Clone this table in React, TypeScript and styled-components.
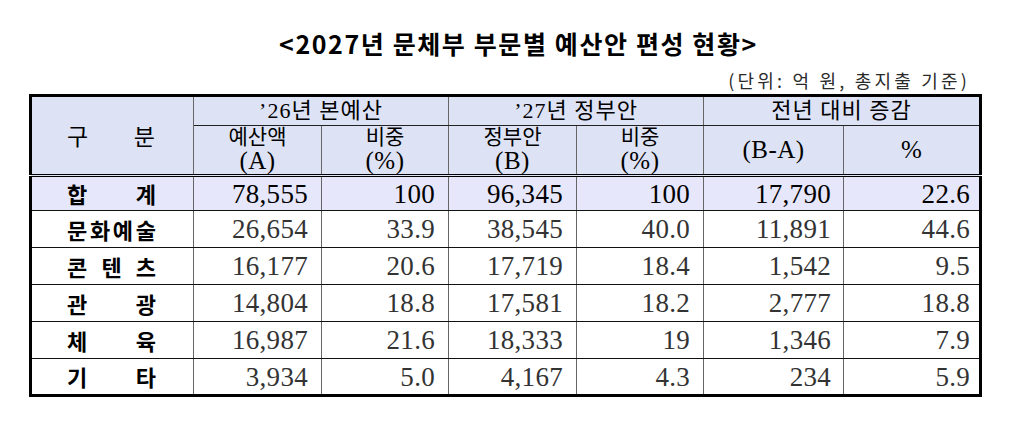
import React from "react";
import styled, { createGlobalStyle } from "styled-components";

const GlobalStyle = createGlobalStyle`
  html, body { margin: 0; padding: 0; background: #fff; }
  body { font-family: "Noto Sans CJK KR", "Noto Sans", sans-serif; color: #000; }
`;

const Page = styled.div`
  width: 1009px;
  height: 445px;
  padding-top: 26px;
  box-sizing: border-box;
  display: flex;
  flex-direction: column;
`;

const Title = styled.h1`
  margin: 0;
  padding-left: 28px;
  text-align: center;
  font-family: "Noto Sans CJK KR", sans-serif;
  font-weight: 700;
  font-size: 25px;
  line-height: 34px;
  letter-spacing: 1.6px;
  color: #000;
`;

const Note = styled.div`
  align-self: flex-end;
  margin-right: 39px;
  font-family: "Noto Sans CJK KR", sans-serif;
  font-size: 18px;
  line-height: 22px;
  letter-spacing: 3.2px;
  color: #2a2a2a;
  margin-top: 9px;
`;

const Table = styled.table`
  margin: 3px 0 0 29px;
  width: 950px;
  table-layout: fixed;
  border-collapse: collapse;
  border: 3px solid #000;
`;

const HeadCell = styled.th<{ $double?: boolean }>`
  background: #dde3f4;
  border-top: 1px solid #222;
  border-left: 1px solid #666;
  border-right: 1px solid #666;
  border-bottom: ${(p) => (p.$double ? "3px double #000" : "1px solid #222")};
  padding: 0;
  font-weight: 400;
  font-family: "Liberation Serif", "Noto Sans CJK KR", serif;
  font-size: 21px;
  color: #000;
  text-align: center;
  vertical-align: middle;
`;

const GroupRow = styled.tr`
  height: 30px;
  & > th { font-size: 22px; line-height: 26px; letter-spacing: 1px; }
`;

const SubRow = styled.tr`
  height: 50px;
  & > th { line-height: 23px; }
`;

const Latin = styled.span`
  font-family: "Liberation Serif", serif;
  font-size: 25px;
  letter-spacing: 0.5px;
`;

const Spread = styled.div<{ $size?: number; $bold?: boolean }>`
  display: flex;
  justify-content: space-between;
  padding: 0 37px 0 35px;
  font-family: "Noto Sans CJK KR", sans-serif;
  font-size: ${(p) => p.$size ?? 22}px;
  font-weight: ${(p) => (p.$bold ? 700 : 400)};
  line-height: 1.2;
  color: #000;
`;

const DataRow = styled.tr<{ $total?: boolean }>`
  height: ${(p) => (p.$total ? 35 : 37)}px;
  background: ${(p) => (p.$total ? "#e7e7fb" : "#fff")};
`;

const LabelCell = styled.td`
  padding: 0;
  border-top: 1px solid #111;
  border-bottom: 1px solid #111;
  border-left: 1px solid #666;
  border-right: 1px solid #666;
  vertical-align: middle;
`;

const NumCell = styled.td<{ $total?: boolean; $pad?: number }>`
  padding: 0 ${(p) => p.$pad ?? 13}px 0 0;
  border-top: 1px solid #111;
  border-bottom: 1px solid #111;
  border-left: 1px solid #666;
  border-right: 1px solid #666;
  text-align: right;
  vertical-align: middle;
  font-family: "Liberation Serif", "Times New Roman", serif;
  font-size: 27px;
  line-height: 30px;
  letter-spacing: 0.3px;
  color: ${(p) => (p.$total ? "#000" : "#333")};
`;

type Row = { label: string; vals: string[]; total?: boolean };

const rows: Row[] = [
  { label: "합계", vals: ["78,555", "100", "96,345", "100", "17,790", "22.6"], total: true },
  { label: "문화예술", vals: ["26,654", "33.9", "38,545", "40.0", "11,891", "44.6"] },
  { label: "콘텐츠", vals: ["16,177", "20.6", "17,719", "18.4", "1,542", "9.5"] },
  { label: "관광", vals: ["14,804", "18.8", "17,581", "18.2", "2,777", "18.8"] },
  { label: "체육", vals: ["16,987", "21.6", "18,333", "19", "1,346", "7.9"] },
  { label: "기타", vals: ["3,934", "5.0", "4,167", "4.3", "234", "5.9"] },
];

const colWidths = [163, 128, 127, 128, 127, 140, 137];
const pads = [13, 13, 13, 13, 12, 9];

export default function App() {
  return (
    <Page>
      <GlobalStyle />
      <Title>&lt;2027년 문체부 부문별 예산안 편성 현황&gt;</Title>
      <Note>(단위: 억 원, 총지출 기준)</Note>
      <Table>
        <colgroup>
          {colWidths.map((w, i) => (
            <col key={i} style={{ width: w }} />
          ))}
        </colgroup>
        <thead>
          <GroupRow>
            <HeadCell rowSpan={2} $double>
              <Spread $size={23}>
                <span>구</span>
                <span>분</span>
              </Spread>
            </HeadCell>
            <HeadCell colSpan={2}>’26년 본예산</HeadCell>
            <HeadCell colSpan={2}>’27년 정부안</HeadCell>
            <HeadCell colSpan={2}>전년 대비 증감</HeadCell>
          </GroupRow>
          <SubRow>
            <HeadCell $double>
              예산액
              <br />
              <Latin>(A)</Latin>
            </HeadCell>
            <HeadCell $double>
              비중
              <br />
              <Latin>(%)</Latin>
            </HeadCell>
            <HeadCell $double>
              정부안
              <br />
              <Latin>(B)</Latin>
            </HeadCell>
            <HeadCell $double>
              비중
              <br />
              <Latin>(%)</Latin>
            </HeadCell>
            <HeadCell $double>
              <Latin>(B-A)</Latin>
            </HeadCell>
            <HeadCell $double>
              <Latin>%</Latin>
            </HeadCell>
          </SubRow>
        </thead>
        <tbody>
          {rows.map((r) => (
            <DataRow key={r.label} $total={r.total}>
              <LabelCell>
                <Spread $bold>
                  {Array.from(r.label).map((c, i) => (
                    <span key={i}>{c}</span>
                  ))}
                </Spread>
              </LabelCell>
              {r.vals.map((v, i) => (
                <NumCell key={i} $total={r.total} $pad={pads[i]}>
                  {v}
                </NumCell>
              ))}
            </DataRow>
          ))}
        </tbody>
      </Table>
    </Page>
  );
}
